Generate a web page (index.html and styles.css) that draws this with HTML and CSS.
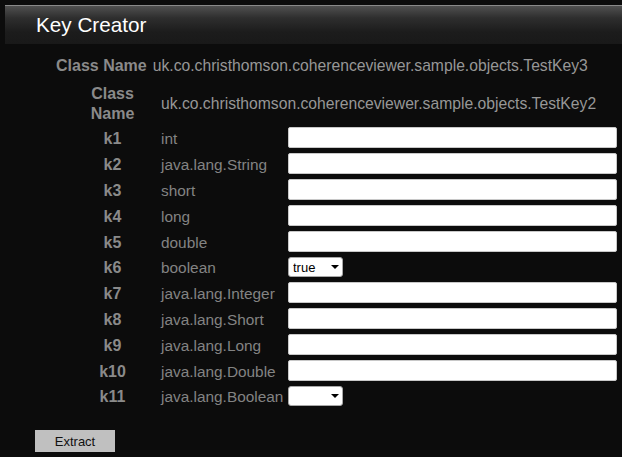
FILE: index.html
```html
<!DOCTYPE html>
<html>
<head>
<meta charset="utf-8">
<title>Key Creator</title>
<link rel="stylesheet" href="styles.css">
</head>
<body>
<div class="header"><h1 class="title">Key Creator</h1></div>
<div class="summary">
  <span class="label">Class Name</span>
  <span class="value">uk.co.christhomson.coherenceviewer.sample.objects.TestKey3</span>
</div>
<div class="fields">
  <div class="label class-label">Class Name</div>
  <div class="value class-value">uk.co.christhomson.coherenceviewer.sample.objects.TestKey2</div>

  <div class="label cell">k1</div><div class="type cell">int</div><div class="cell"><input class="field" type="text"></div>
  <div class="label cell">k2</div><div class="type cell">java.lang.String</div><div class="cell"><input class="field" type="text"></div>
  <div class="label cell">k3</div><div class="type cell">short</div><div class="cell"><input class="field" type="text"></div>
  <div class="label cell">k4</div><div class="type cell">long</div><div class="cell"><input class="field" type="text"></div>
  <div class="label cell">k5</div><div class="type cell">double</div><div class="cell"><input class="field" type="text"></div>
  <div class="label cell">k6</div><div class="type cell">boolean</div><div class="cell"><span class="select-wrap"><select class="select"><option>true</option><option>false</option></select></span></div>
  <div class="label cell">k7</div><div class="type cell">java.lang.Integer</div><div class="cell"><input class="field" type="text"></div>
  <div class="label cell">k8</div><div class="type cell">java.lang.Short</div><div class="cell"><input class="field" type="text"></div>
  <div class="label cell">k9</div><div class="type cell">java.lang.Long</div><div class="cell"><input class="field" type="text"></div>
  <div class="label cell">k10</div><div class="type cell">java.lang.Double</div><div class="cell"><input class="field" type="text"></div>
  <div class="label cell">k11</div><div class="type cell">java.lang.Boolean</div><div class="cell"><span class="select-wrap"><select class="select"><option></option><option>true</option><option>false</option></select></span></div>
</div>
<div class="actions"><button class="extract" type="button">Extract</button></div>
</body>
</html>
```
FILE: styles.css
```css
html, body {
  margin: 0;
  padding: 0;
  background: #0c0c0c;
  font-family: "Liberation Sans", Arial, sans-serif;
  overflow: hidden;
}
body {
  width: 622px;
  height: 457px;
  padding-top: 5px;
  box-sizing: border-box;
}
.header {
  margin-left: 5px;
  height: 39px;
  border-top: 1px solid #8a8a8a;
  box-sizing: border-box;
  background: linear-gradient(to bottom, #505050 0px, #2e2e2e 12px, #1c1c1c 26px, #191919 38px);
  padding-left: 31px;
}
.title {
  margin: 0;
  font-weight: normal;
  font-size: 20.7px;
  line-height: 38px;
  color: #ffffff;
}
.summary {
  display: flex;
  align-items: baseline;
  gap: 6px;
  margin: 12px 0 0 56px;
  line-height: 20px;
}
.label {
  font-weight: bold;
  font-size: 16px;
  line-height: 20px;
  color: #8a8a8a;
}
.value {
  font-size: 15.7px;
  color: #979797;
  white-space: nowrap;
}
.fields {
  display: grid;
  grid-template-columns: 55px 148px 329px;
  margin: 8px 0 0 85px;
}
.fields .label {
  text-align: center;
}
.class-label {
  padding-bottom: 1px;
}
.class-value {
  grid-column: 2 / 4;
  display: flex;
  align-items: center;
  padding-left: 21px;
  padding-bottom: 1px;
}
.cell {
  display: flex;
  align-items: center;
  padding: 2px 0 3px;
}
.fields .label.cell {
  justify-content: center;
  padding-top: 3px;
  padding-bottom: 2px;
}
.type {
  font-size: 15.4px;
  line-height: 20px;
  color: #838383;
  padding-left: 21px;
  padding-top: 3px;
  padding-bottom: 2px;
  white-space: nowrap;
}
.field {
  display: block;
  width: 329px;
  height: 21px;
  margin: 0;
  box-sizing: border-box;
  border: 1px solid #c8c8c8;
  border-radius: 2px;
  background: #ffffff;
  padding: 0 3px;
  font-family: "Liberation Sans", Arial, sans-serif;
  font-size: 13px;
}
.select-wrap {
  position: relative;
  display: block;
  width: 55px;
  height: 20px;
}
.select-wrap::after {
  content: "";
  position: absolute;
  right: 4px;
  top: 8px;
  border-left: 4px solid transparent;
  border-right: 4px solid transparent;
  border-top: 4px solid #000000;
  pointer-events: none;
}
.select {
  display: block;
  appearance: none;
  -webkit-appearance: none;
  width: 55px;
  height: 20px;
  margin: 0;
  box-sizing: border-box;
  border: 1px solid #a8a8a8;
  border-radius: 3px;
  background: #ffffff;
  padding: 0 0 0 4px;
  font-family: "Liberation Sans", Arial, sans-serif;
  font-size: 13px;
  color: #000000;
}
.actions {
  margin: 21px 0 0 35px;
}
.extract {
  display: block;
  width: 80px;
  height: 22px;
  margin: 0;
  border: none;
  border-radius: 0;
  background: #c0c0c0;
  color: #111111;
  font-family: "Liberation Sans", Arial, sans-serif;
  font-size: 13px;
  padding: 0;
}
```
